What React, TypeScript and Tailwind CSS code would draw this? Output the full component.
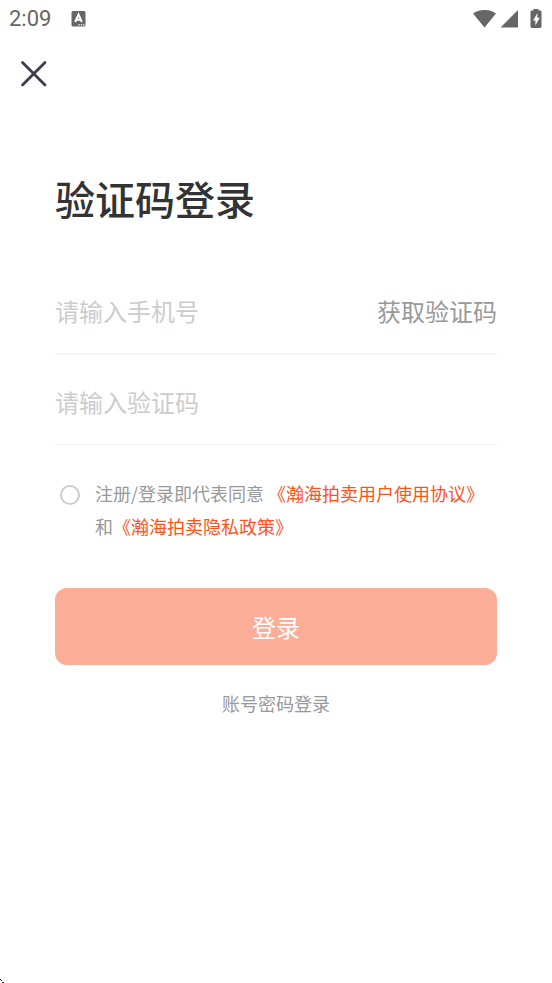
import { useState } from "react";

function StatusBar() {
  return (
    <header className="flex h-9 items-center justify-between pt-px pr-2.5 pl-[9px] text-[#666]">
      <div className="flex items-center gap-5">
        <span className="font-[Roboto,sans-serif] text-[22px] leading-6">2:09</span>
        <svg className="size-4" viewBox="0 0 16 16" aria-hidden="true">
          <rect x="0.5" width="14" height="15.5" rx="1.5" fill="#666" />
          <path d="M4.2 11 7.5 3.4l3.3 7.6M5.4 8.8h4.2" fill="none" stroke="#fff" strokeWidth="2" />
          <path d="M7.4 13.2h1.4v1.4H7.4zM9.8 13.2h1.4v1.4H9.8zM12.2 13.2h1.4v1.4h-1.4z" fill="#fff" />
        </svg>
      </div>
      <div className="flex items-center">
        <svg className="h-5 w-[70px]" viewBox="0 0 70 20" fill="#666" aria-hidden="true">
          <path d="M1 4.4C7.3-.1 17.7-.1 24 4.4L12.5 18.4Z" />
          <path d="M46 1v17.6H28.6Z" />
          <path d="M61.5 0h5v1.5h1.6c.8 0 1.4.6 1.4 1.4v14.6c0 .8-.6 1.4-1.4 1.4h-8.2c-.8 0-1.4-.6-1.4-1.4V2.9c0-.8.6-1.4 1.4-1.4h1.6z" />
          <path d="M65.5 4 61 11.6h2.4v4.9l4.3-7.7h-2.5z" fill="#fff" />
        </svg>
      </div>
    </header>
  );
}

export default function App() {
  const [agreed, setAgreed] = useState(false);
  return (
    <div className="relative flex min-h-screen flex-col bg-white font-['Noto_Sans_CJK_SC',sans-serif]">
      <StatusBar />
      <nav className="px-5 pt-6">
        <button type="button" aria-label="关闭" className="block size-7">
          <svg viewBox="0 0 28 28" fill="none" stroke="#3b3d4d" strokeWidth="2.8" strokeLinecap="round">
            <path d="M2.5 2.5 25 25M25 2.5 2.5 25" />
          </svg>
        </button>
      </nav>
      <main className="px-[55px] pt-20">
        <h1 className="text-[40px] leading-[60px] font-medium text-[#333]">验证码登录</h1>
        <form onSubmit={(e) => e.preventDefault()}>
          <div className="mt-10 flex h-[87px] items-center border-b-2 border-[#f5f5f5]">
            <input
              type="tel"
              aria-label="手机号"
              placeholder="请输入手机号"
              className="h-10 min-w-0 flex-1 text-2xl text-[#333] outline-none placeholder:text-[#ccc]"
            />
            <button type="button" className="shrink-0 text-2xl text-[#999]">获取验证码</button>
          </div>
          <div className="flex h-[90px] items-center border-b border-[#f5f5f5] pt-1">
            <input
              type="text"
              inputMode="numeric"
              aria-label="验证码"
              placeholder="请输入验证码"
              className="h-10 w-full text-2xl text-[#333] outline-none placeholder:text-[#ccc]"
            />
          </div>
          <div className="mt-8 flex items-start gap-[15px] pl-[5px]">
            <input
              id="agree"
              type="checkbox"
              checked={agreed}
              onChange={(e) => setAgreed(e.target.checked)}
              className="mt-2 size-5 shrink-0 appearance-none rounded-full border-2 border-[#ccc] checked:border-[#ff5219] checked:bg-[#ff5219]"
            />
            <p className="text-lg leading-[33px] text-[#999]">
              <label htmlFor="agree">注册/登录即代表同意</label>{" "}
              <a href="#terms" className="text-[#ff5219]">《瀚海拍卖用户使用协议》</a>
              和
              <a href="#privacy" className="text-[#ff5219]">《瀚海拍卖隐私政策》</a>
            </p>
          </div>
          <button type="submit" className="mt-[45px] h-[77px] w-full rounded-xl bg-[#fcad97] text-2xl text-white">
            登录
          </button>
        </form>
        <div className="mt-6 text-center">
          <a href="#password" className="text-lg text-[#999]">账号密码登录</a>
        </div>
      </main>
      <svg className="absolute bottom-0 left-0 size-1" viewBox="0 0 4 4" fill="#222" aria-hidden="true">
        <path d="M0 0h1v1H0zM1 1h1v1H1zM2 3h1v1H2zM3 3h1v1H3z" />
      </svg>
    </div>
  );
}
